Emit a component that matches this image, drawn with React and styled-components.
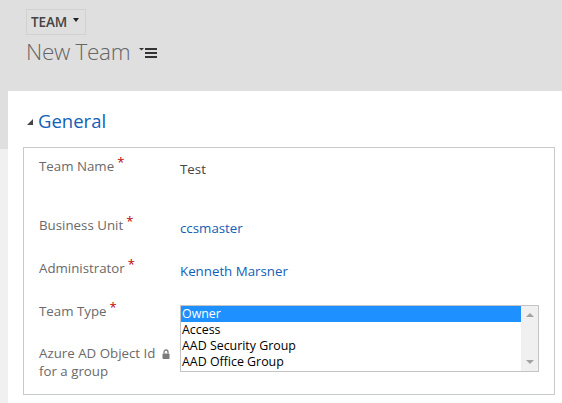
import React from "react";
import styled, { createGlobalStyle } from "styled-components";

const Global = createGlobalStyle`
  html, body { margin: 0; padding: 0; }
  body {
    width: 562px;
    height: 403px;
    overflow: hidden;
    font-family: "Open Sans", "Noto Sans", sans-serif;
    background: linear-gradient(#dfdfdf 0 149px, #f0f0f0 149px);
  }
`;

const Page = styled.div`
  display: flex;
  flex-direction: column;
  height: 403px;
`;

const Header = styled.header`
  height: 91px;
  box-sizing: border-box;
  padding: 9px 0 0 26px;
  display: flex;
  flex-direction: column;
  align-items: flex-start;
`;

const EntityButton = styled.div`
  height: 26px;
  box-sizing: border-box;
  border: 1px solid #d2d2d2;
  padding: 0 6px 0 4px;
  display: flex;
  align-items: center;
  gap: 6px;
  font-size: 13.5px;
  font-weight: 600;
  color: #444;
  letter-spacing: -0.1px;
`;

const Caret = styled.span`
  width: 0;
  height: 0;
  border-left: 3.5px solid transparent;
  border-right: 3.5px solid transparent;
  border-top: 4px solid #222;
  align-self: flex-start;
  margin-top: 8px;
`;

const TitleRow = styled.div`
  display: flex;
  align-items: center;
  gap: 9px;
  margin-top: 1px;
`;

const Title = styled.h1`
  margin: 0;
  font-size: 22.5px;
  font-weight: 300;
  color: #666;
  line-height: 32px;
  letter-spacing: -0.3px;
`;

const Panel = styled.main`
  flex: 1;
  margin-left: 8px;
  background: #fff;
  padding: 0 7px 0 15px;
`;

const SectionHead = styled.div`
  height: 56px;
  display: flex;
  align-items: center;
  gap: 5px;
  padding-left: 4px;
  padding-top: 4px;
  box-sizing: border-box;
`;

const Tri = styled.span`
  width: 0;
  height: 0;
  border-left: 6px solid transparent;
  border-bottom: 6px solid #444;
  margin-top: 2px;
`;

const SectionTitle = styled.h2`
  margin: 0;
  font-size: 18.5px;
  font-weight: 400;
  color: #1160b7;
  line-height: 24px;
`;

const FormBox = styled.section`
  border: 1px solid #c6caca;
  height: 248px;
  box-sizing: border-box;
  padding: 8px 0 0 15px;
  display: flex;
  flex-direction: column;
`;

const Row = styled.div`
  display: flex;
  height: ${(p) => p.$h}px;
  font-size: 13.3px;
`;

const Label = styled.div`
  width: 141px;
  flex: none;
  color: #6a6a6a;
  line-height: ${(p) => (p.$multi ? "18px" : "20px")};
  padding-top: ${(p) => (p.$multi ? "0px" : "0")};
  position: relative;
`;

const Req = styled.span`
  color: #c00000;
  font-size: 13px;
  margin-left: 3px;
  position: relative;
  top: -4px;
`;

const Value = styled.div`
  flex: 1;
  padding-top: 3px;
  line-height: 20px;
  color: ${(p) => (p.$link ? "#1160b7" : "#444")};
  position: relative;
`;

const LockIcon = styled.svg`
  vertical-align: -1px;
  margin-left: 7px;
`;

const ListBox = styled.div`
  position: absolute;
  left: 0;
  top: 4px;
  width: 359px;
  height: 67px;
  box-sizing: border-box;
  border: 1px solid #c4c4c4;
  background: #fff;
  display: flex;
  z-index: 2;
`;

const Options = styled.div`
  flex: 1;
  display: flex;
  flex-direction: column;
`;

const Option = styled.div`
  height: 16px;
  line-height: 16px;
  font-size: 12.4px;
  color: ${(p) => (p.$sel ? "#fff" : "#000")};
  background: ${(p) => (p.$sel ? "#1e90ff" : "transparent")};
  padding-left: 1px;
  white-space: nowrap;
`;

const ScrollBar = styled.div`
  width: 17px;
  background: #f0f0f0;
  display: flex;
  flex-direction: column;
  justify-content: space-between;
  align-items: center;
  padding: 7px 0 7px;
`;

const Arrow = styled.span`
  width: 0;
  height: 0;
  border-left: 4px solid transparent;
  border-right: 4px solid transparent;
  ${(p) =>
    p.$up
      ? "border-bottom: 4px solid #a3a3a3;"
      : "border-top: 4px solid #a3a3a3;"}
`;

const options = ["Owner", "Access", "AAD Security Group", "AAD Office Group"];

export default function App() {
  return (
    <>
      <Global />
      <Page>
        <Header>
          <EntityButton>
            TEAM <Caret />
          </EntityButton>
          <TitleRow>
            <Title>New Team</Title>
            <svg width="18" height="11" viewBox="0 0 18 11">
              <polygon points="0,1 5,1 2.5,3.5" fill="#333" />
              <rect x="6" y="1" width="12" height="2" fill="#333" />
              <rect x="6" y="5" width="12" height="2" fill="#333" />
              <rect x="6" y="9" width="12" height="2" fill="#333" />
            </svg>
          </TitleRow>
        </Header>
        <Panel>
          <SectionHead>
            <Tri />
            <SectionTitle>General</SectionTitle>
          </SectionHead>
          <FormBox>
            <Row $h={59}>
              <Label>
                Team Name<Req>*</Req>
              </Label>
              <Value>Test</Value>
            </Row>
            <Row $h={43}>
              <Label>
                Business Unit<Req>*</Req>
              </Label>
              <Value $link>ccsmaster</Value>
            </Row>
            <Row $h={43}>
              <Label>
                Administrator<Req>*</Req>
              </Label>
              <Value $link>Kenneth Marsner</Value>
            </Row>
            <Row $h={43}>
              <Label>
                Team Type<Req>*</Req>
              </Label>
              <Value>
                <ListBox>
                  <Options>
                    {options.map((o, i) => (
                      <Option key={o} $sel={i === 0}>
                        {o}
                      </Option>
                    ))}
                  </Options>
                  <ScrollBar>
                    <Arrow $up />
                    <Arrow />
                  </ScrollBar>
                </ListBox>
              </Value>
            </Row>
            <Row $h={40}>
              <Label $multi>
                Azure AD Object Id
                <LockIcon width="8" height="10" viewBox="0 0 8 10">
                  <path
                    d="M2 4.5V3a2 2 0 0 1 4 0v1.5"
                    fill="none"
                    stroke="#7a7a7a"
                    strokeWidth="1.3"
                  />
                  <rect x="0.5" y="4.5" width="7" height="5.5" rx="0.8" fill="#7a7a7a" />
                </LockIcon>
                <br />
                for a group
              </Label>
              <Value />
            </Row>
          </FormBox>
        </Panel>
      </Page>
    </>
  );
}
